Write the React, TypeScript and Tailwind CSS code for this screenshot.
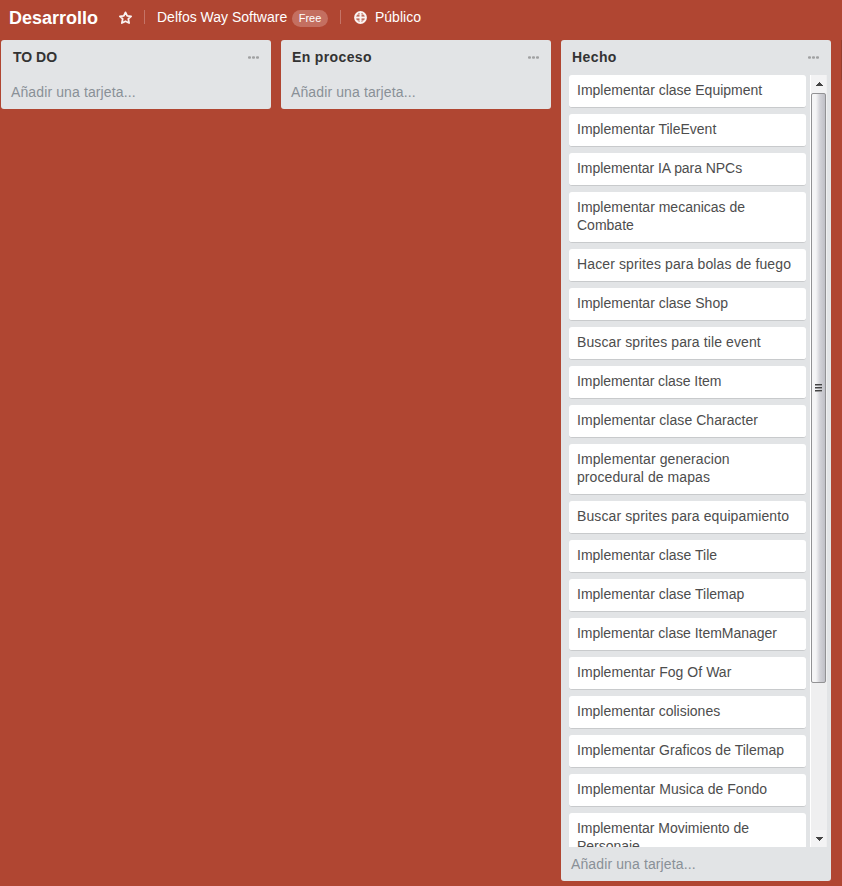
type Card = { text: string; tracking?: string };

const cards: Card[] = [
  { text: 'Implementar clase Equipment' },
  { text: 'Implementar TileEvent' },
  { text: 'Implementar IA para NPCs', tracking: 'tracking-[-0.06px]' },
  { text: 'Implementar mecanicas de Combate' },
  { text: 'Hacer sprites para bolas de fuego', tracking: 'tracking-[0.12px]' },
  { text: 'Implementar clase Shop' },
  { text: 'Buscar sprites para tile event', tracking: 'tracking-[0.11px]' },
  { text: 'Implementar clase Item', tracking: 'tracking-[-0.05px]' },
  { text: 'Implementar clase Character', tracking: 'tracking-[0.05px]' },
  { text: 'Implementar generacion procedural de mapas', tracking: 'tracking-[0.08px]' },
  { text: 'Buscar sprites para equipamiento', tracking: 'tracking-[0.11px]' },
  { text: 'Implementar clase Tile' },
  { text: 'Implementar clase Tilemap' },
  { text: 'Implementar clase ItemManager', tracking: 'tracking-[-0.03px]' },
  { text: 'Implementar Fog Of War', tracking: 'tracking-[0.04px]' },
  { text: 'Implementar colisiones' },
  { text: 'Implementar Graficos de Tilemap', tracking: 'tracking-[0.03px]' },
  { text: 'Implementar Musica de Fondo', tracking: 'tracking-[0.04px]' },
  { text: 'Implementar Movimiento de Personaje', tracking: 'tracking-[-0.03px]' },
];

function ListHeader({ title, tone = '' }: { title: string; tone?: string }) {
  return (
    <div className="flex h-[35px] shrink-0 items-start justify-between pt-[8px] pr-[12px] pl-[11px]">
      <h2 className={`text-[14px] leading-[18px] font-bold text-[#333] ${tone}`}>{title}</h2>
      <svg width="11" height="3" viewBox="0 0 11 3" className="mt-[8px] fill-[#a0a1a2]">
        <rect x="0" y="0.3" width="3" height="2.5" rx="1" />
        <rect x="4" y="0.3" width="3" height="2.5" rx="1" />
        <rect x="8" y="0.3" width="3" height="2.5" rx="1" />
      </svg>
    </div>
  );
}

function AddCard() {
  return <div className="h-[34px] shrink-0 pt-[8px] pl-[10px] leading-[18px] tracking-[0.12px] text-[#899097]">Añadir una tarjeta...</div>;
}

function Scrollbar() {
  return (
    <div className="flex w-[17px] shrink-0 flex-col border-l border-white bg-[#efeff0] pr-px">
      <div className="flex h-[18px] shrink-0 items-center justify-center bg-[#f3f3f4] pl-px">
        <svg width="7" height="4" viewBox="0 0 7 4" shapeRendering="crispEdges" className="fill-[#444]">
          <path d="M3 0h1v1h1v1h1v1h1v1H0V3h1V2h1V1h1z" />
        </svg>
      </div>
      <div className="flex h-[590px] shrink-0 items-center justify-center rounded-[2px] border border-[#929294] bg-linear-to-r from-[#f5f5f6] from-30% via-[#d3d3d8] via-60% to-[#bfbfc6]">
        <div className="flex flex-col gap-px">
          <div className="h-[2px] w-[7px] border-t border-[#444] bg-[#9a9a9c]" />
          <div className="h-[2px] w-[7px] border-t border-[#444] bg-[#9a9a9c]" />
          <div className="h-[2px] w-[7px] border-t border-[#444] bg-[#9a9a9c]" />
        </div>
      </div>
      <div className="flex-1" />
      <div className="flex h-[17px] shrink-0 items-center justify-center bg-[#f3f3f4] pl-px">
        <svg width="7" height="4" viewBox="0 0 7 4" shapeRendering="crispEdges" className="fill-[#444]">
          <path d="M0 0h7v1H6v1H5v1H4v1H3V3H2V2H1V1H0z" />
        </svg>
      </div>
    </div>
  );
}

export default function App() {
  return (
    <div className="flex h-[886px] w-[842px] flex-col overflow-hidden bg-[#b04632] font-['Liberation_Sans',Arial,sans-serif] text-[14px]">
      <header className="flex h-[40px] shrink-0 items-start pl-[9px] leading-[18px] text-white">
        <h1 className="mt-[8px] w-[109px] text-[18px] leading-[20px] font-bold">Desarrollo</h1>
        <svg width="15" height="14" viewBox="0 0 15 14" className="mt-[11px] fill-none stroke-[#faf3f2]">
          <path d="M7.5 1.4 9.2 4.9 13.1 5.3 10.3 7.9 11.1 12 7.5 10.2 3.9 12 4.7 7.9 1.9 5.3 5.8 4.9z" strokeWidth="1.8" strokeLinejoin="round" />
        </svg>
        <div className="mt-[10px] ml-[11px] h-[14px] w-px bg-[#c57467]" />
        <span className="mt-[8px] ml-[12px] w-[135px] whitespace-nowrap">Delfos Way Software</span>
        <span className="mt-[10px] flex h-[17px] w-[36px] items-center justify-center rounded-full bg-[#c46f60] text-[11px] leading-[17px]">Free</span>
        <div className="mt-[10px] ml-[12px] h-[14px] w-px bg-[#c57467]" />
        <svg width="13" height="13" viewBox="0 0 13 13" className="mt-[11px] ml-[13px] fill-none stroke-[#faf3f2]">
          <circle cx="6.5" cy="6.5" r="5.4" strokeWidth="2" />
          <path d="M6.5 1v11M1 6.5h11" strokeWidth="2" />
          <path d="M3 3.8h7M3 9.2h7" strokeWidth="1" strokeOpacity=".75" />
        </svg>
        <span className="mt-[8px] ml-[8px]">Público</span>
      </header>
      <main className="flex items-start gap-[10px] pl-px">
        <section className="w-[270px] shrink-0 rounded-[3px] bg-[#e2e4e6]">
          <ListHeader title="TO DO" tone="pl-px" />
          <AddCard />
        </section>
        <section className="w-[270px] shrink-0 rounded-[3px] bg-[#e2e4e6]">
          <ListHeader title="En proceso" tone="tracking-[0.36px]" />
          <AddCard />
        </section>
        <section className="flex h-[841px] w-[270px] shrink-0 flex-col rounded-[3px] bg-[#e2e4e6]">
          <ListHeader title="Hecho" tone="tracking-[0.4px]" />
          <div className="flex h-[772px] shrink-0 gap-[4px] overflow-hidden pl-[8px]">
            <div className="flex w-[237px] shrink-0 flex-col gap-[6px]">
              {cards.map(({ text, tracking = '' }) => (
                <div
                  key={text}
                  className={`shrink-0 rounded-[3px] border-b border-[#c8cacc] bg-white pt-[6px] pr-[12px] pb-[8px] pl-[8px] leading-[18px] text-[#4d4d4d] ${tracking}`}
                >
                  {text}
                </div>
              ))}
            </div>
            <Scrollbar />
          </div>
          <AddCard />
        </section>
        <div className="h-[40px] w-[270px] shrink-0 bg-[#963c2b]" />
      </main>
    </div>
  );
}
